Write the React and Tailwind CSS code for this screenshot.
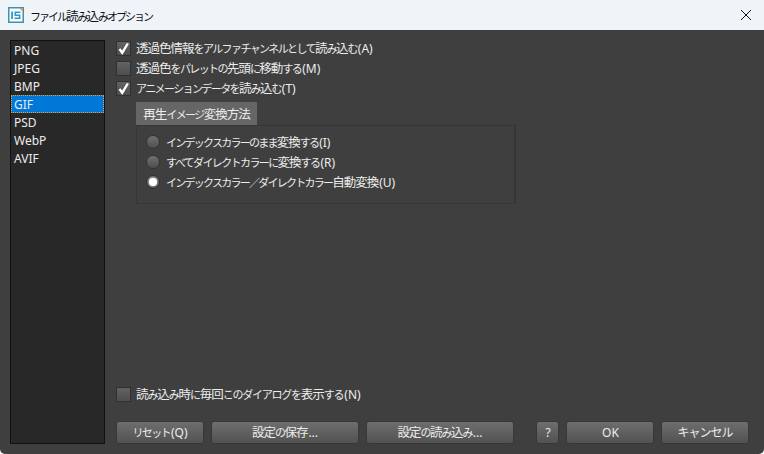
const font = { fontFamily: '"Noto Sans","Noto Sans CJK JP",sans-serif' };

// Reference font has narrow kana: split text into runs per script and set each run's size and spacing.
function T({ children, kana = "text-[11px] tracking-[-1.6px]" }) {
  const runs = children.match(/[\u3040-\u30ff\uff0f]+|[\u4e00-\u9fff]+|[^\u3040-\u30ff\uff0f\u4e00-\u9fff]+/g);
  return (
    <>
      {runs.map((r, i) => {
        const c = r.charCodeAt(0);
        const cls =
          (c >= 0x3040 && c <= 0x30ff) || c === 0xff0f
            ? kana
            : c >= 0x4e00 && c <= 0x9fff
              ? "text-[12.5px] tracking-[-1px]"
              : "text-[12px] pl-[1px]";
        return (
          <span key={i} className={cls}>
            {r}
          </span>
        );
      })}
    </>
  );
}

function Check({ checked, label, kana }) {
  return (
    <div className="flex items-center h-5 gap-[5px]">
      <div className="w-[15px] h-[15px] border border-[#303030] bg-gradient-to-b from-[#626262] to-[#4e4e4e] flex items-center justify-center shrink-0">
        {checked && (
          <svg width="13" height="13" viewBox="0 0 13 13">
            <path d="M2.5 7 L5.2 10.8 L10.8 1.5" fill="none" stroke="#fff" strokeWidth="2.4" />
          </svg>
        )}
      </div>
      <span className="leading-5 text-[#ececec] whitespace-nowrap">
        <T kana={kana}>{label}</T>
      </span>
    </div>
  );
}

function Radio({ checked, label, kana }) {
  return (
    <div className="flex items-center h-5 gap-[6px]">
      <div className="w-[14px] h-[14px] rounded-full border border-[#333333] bg-gradient-to-b from-[#727272] to-[#4e4e4e] flex items-center justify-center shrink-0">
        {checked && <div className="w-[8px] h-[8px] rounded-full bg-white shadow-[0_0_2px_#ffffff]" />}
      </div>
      <span className="leading-5 text-[#ececec] whitespace-nowrap">
        <T kana={kana}>{label}</T>
      </span>
    </div>
  );
}

function Btn({ w, children, kana }) {
  return (
    <button className={`${w} h-[23px] pb-[2px] leading-[19px] rounded-[3px] border border-[#383838] bg-gradient-to-b from-[#6e6e6e] to-[#525252] text-[#ececec] whitespace-nowrap`}>
      <T kana={kana}>{children}</T>
    </button>
  );
}

export default function App() {
  const items = ["PNG", "JPEG", "BMP", "GIF", "PSD", "WebP", "AVIF"];
  return (
    <div className="w-[764px] h-[454px] flex flex-col bg-[#3f3f3f] overflow-hidden rounded-b-[5px]" style={font}>
      <div className="h-[30px] bg-[#eff4f9] flex items-center pl-[8px] pr-[12px] shrink-0">
        <svg width="16" height="16" viewBox="0 0 16 16" className="shrink-0">
          <rect x="0.75" y="0.75" width="14.5" height="14.5" fill="#fff" stroke="#3f93a5" strokeWidth="1.5" />
          <path d="M11 1 H15 V5 Z" fill="#d99a7c" />
          <rect x="3.2" y="4.5" width="1.8" height="7.5" fill="#2a9bd0" />
          <path d="M12.5 5.3 H7.3 V8.2 H11.7 V11.2 H6.5" fill="none" stroke="#2a9bd0" strokeWidth="1.6" />
        </svg>
        <span className="ml-[6px] text-[#111]">
          <T kana="text-[11px] tracking-[-2px]">ファイル読み込みオプション</T>
        </span>
        <svg width="12" height="12" viewBox="0 0 12 12" className="ml-auto">
          <path d="M1 1 L11 11 M11 1 L1 11" stroke="#111" strokeWidth="1" />
        </svg>
      </div>

      <div className="flex flex-1 pl-[10px] pr-[15px] pt-[8px] pb-[10px] gap-[10px]">
        <div className="mt-[2px] w-[95px] border border-[#111] bg-[#282828] flex flex-col shrink-0">
          {items.map((it) => (
            <div
              key={it}
              className={`h-[18px] pl-[3px] text-[12px] leading-[20px] text-[#ececec] ${it === "GIF" ? "bg-[#0078d7] outline-1 outline-dotted outline-[#f0a030] -outline-offset-1" : ""}`}
            >
              {it}
            </div>
          ))}
        </div>

        <div className="flex-1 flex flex-col pl-[1px]">
          <Check checked label="透過色情報をアルファチャンネルとして読み込む(A)" />
          <Check label="透過色をパレットの先頭に移動する(M)" />
          <Check checked label="アニメーションデータを読み込む(T)" />

          <div className="ml-[20px] mt-[4px] w-[380px]">
            <div className="w-[121px] h-6 bg-[#666666] leading-[23px] text-[#ececec] text-center">
              <T>再生イメージ変換方法</T>
            </div>
            <div className="h-[79px] border border-[#363636] border-r-2 -mt-px pl-[9px] pt-[6px] flex flex-col">
              <Radio kana="text-[11px] tracking-[-1.75px]" label="インデックスカラーのまま変換する(I)" />
              <Radio label="すべてダイレクトカラーに変換する(R)" />
              <Radio kana="text-[11px] tracking-[-1.75px]" checked label="インデックスカラー／ダイレクトカラー自動変換(U)" />
            </div>
          </div>

          <div className="mt-auto mb-[17px]">
            <Check kana="text-[11px] tracking-[-1.25px]" label="読み込み時に毎回このダイアログを表示する(N)" />
          </div>

          <div className="flex gap-[7px]">
            <Btn w="w-[88px]">リセット(Q)</Btn>
            <Btn w="w-[148px]">設定の保存...</Btn>
            <Btn w="w-[148px]">設定の読み込み...</Btn>
            <Btn w="w-[23px] ml-[15px]">?</Btn>
            <Btn w="w-[88px]">OK</Btn>
            <Btn w="w-[88px]" kana="text-[12px] tracking-[-1px]">キャンセル</Btn>
          </div>
        </div>
      </div>
    </div>
  );
}
